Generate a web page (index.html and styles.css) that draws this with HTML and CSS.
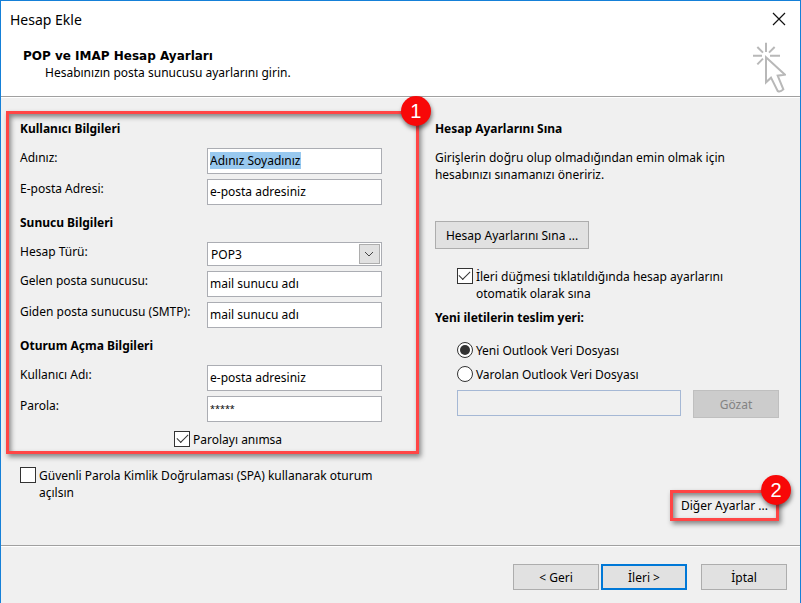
FILE: index.html
```html
<!DOCTYPE html>
<html lang="tr">
<head>
<meta charset="utf-8">
<title>Hesap Ekle</title>
<link rel="stylesheet" href="styles.css">
</head>
<body>
<form class="dialog">
  <header class="header">
    <div class="titlebar">
      <span class="title">Hesap Ekle</span>
      <button type="button" class="close" aria-label="Kapat">
        <svg width="14" height="14" viewBox="0 0 14 14"><path d="M1 1L13 13M13 1L1 13" stroke="#111" stroke-width="1.2" fill="none"/></svg>
      </button>
    </div>
    <div class="intro">
      <div>
        <h1 class="intro-title">POP ve IMAP Hesap Ayarları</h1>
        <p class="intro-text">Hesabınızın posta sunucusu ayarlarını girin.</p>
      </div>
      <svg class="pointer" width="34" height="51" viewBox="36 36 102 153" aria-hidden="true">
        <path d="M39 77H66M90 77H120M78 38V66M52 51L69 68M104 51L87 68M52 103L69 86" fill="none" stroke="#b8b8b8" stroke-width="6"/>
        <path d="M78 82V157L93 143L113 183Q121 187 130 178L113 137L135 134Z" fill="#fff" stroke="#b8b8b8" stroke-width="6"/>
      </svg>
    </div>
  </header>

  <main class="content">
    <div class="account">
      <section class="callout callout-form">
        <span class="badge">1</span>
        <h2 class="heading">Kullanıcı Bilgileri</h2>
        <div class="fields">
          <label for="name">Adınız:</label>
          <input class="text" id="name" type="text" value="Adınız Soyadınız">
          <label for="mail">E-posta Adresi:</label>
          <input class="text" id="mail" type="text" value="e-posta adresiniz">
        </div>
        <h2 class="heading">Sunucu Bilgileri</h2>
        <div class="fields">
          <label for="type">Hesap Türü:</label>
          <div class="select">
            <select id="type"><option>POP3</option></select>
            <span class="arrow"><svg width="10" height="6" viewBox="0 0 10 6"><path d="M1 1L5 5L9 1" stroke="#444" fill="none"/></svg></span>
          </div>
          <label for="incoming">Gelen posta sunucusu:</label>
          <input class="text" id="incoming" type="text" value="mail sunucu adı">
          <label for="outgoing">Giden posta sunucusu (SMTP):</label>
          <input class="text" id="outgoing" type="text" value="mail sunucu adı">
        </div>
        <h2 class="heading">Oturum Açma Bilgileri</h2>
        <div class="fields">
          <label for="user">Kullanıcı Adı:</label>
          <input class="text" id="user" type="text" value="e-posta adresiniz">
          <label for="password">Parola:</label>
          <input class="text masked" id="password" type="text" value="*****">
        </div>
        <label class="choice remember"><input type="checkbox" checked>Parolayı anımsa</label>
      </section>
      <label class="choice spa"><input type="checkbox">Güvenli Parola Kimlik Doğrulaması (SPA) kullanarak oturum açılsın</label>
    </div>

    <div class="side">
      <h2 class="heading">Hesap Ayarlarını Sına</h2>
      <p class="advice">Girişlerin doğru olup olmadığından emin olmak için hesabınızı sınamanızı öneririz.</p>
      <button type="button" class="button test">Hesap Ayarlarını Sına ...</button>
      <label class="choice auto-test"><input type="checkbox" checked>İleri düğmesi tıklatıldığında hesap ayarlarını otomatik olarak sına</label>
      <h2 class="heading">Yeni iletilerin teslim yeri:</h2>
      <div class="delivery">
        <label class="choice"><input type="radio" name="delivery" checked>Yeni Outlook Veri Dosyası</label>
        <label class="choice"><input type="radio" name="delivery">Varolan Outlook Veri Dosyası</label>
        <div class="file">
          <input class="text" type="text" aria-label="Veri dosyası" disabled>
          <button type="button" class="button" disabled>Gözat</button>
        </div>
      </div>
      <div class="callout callout-more">
        <span class="badge">2</span>
        <button type="button" class="more">Diğer Ayarlar ...</button>
      </div>
    </div>
  </main>

  <footer class="footer">
    <button type="button" class="button">&lt; Geri</button>
    <button type="button" class="button primary">İleri &gt;</button>
    <button type="button" class="button cancel">İptal</button>
  </footer>
</form>
<script src="script.js"></script>
</body>
</html>
```

FILE: styles.css
```css
* {
  box-sizing: border-box;
}

body {
  margin: 0;
  color: #000;
  background: #f0f0f0;
  font: 12px/17px "Noto Sans", sans-serif;
}

h1,
h2,
p {
  margin: 0;
}

button,
input,
select {
  margin: 0;
  color: inherit;
  font: inherit;
}

.dialog {
  display: flex;
  flex-direction: column;
  min-height: 100vh;
  border: 1px solid #1580d8;
  border-bottom: 0;
}

.header {
  background: #fff;
  border-bottom: 1px solid #a0a0a0;
}

.titlebar {
  display: flex;
  justify-content: space-between;
  align-items: center;
  height: 36px;
  padding: 0 14px 0 9px;
}

.title {
  font-size: 14px;
}

.close {
  display: flex;
  padding: 0;
  border: 0;
  background: none;
}

.intro {
  display: flex;
  justify-content: space-between;
  height: 59px;
  padding: 5px 14px 0 22px;
}

.intro-title {
  padding-top: 6px;
  font: bold 12px/16px "DejaVu Sans", sans-serif;
}

.intro-text {
  padding-left: 22px;
}

.content {
  flex: 1;
  display: grid;
  grid-template-columns: 6fr 5fr;
  column-gap: 16px;
  padding: 13px 21px 24px 5px;
  border-top: 1px solid #fff;
  border-bottom: 1px solid #a0a0a0;
}

.callout {
  position: relative;
  border: 3px solid #ff4545;
  box-shadow: 2px 3px 5px rgba(0, 0, 0, .45), inset 2px 3px 5px rgba(0, 0, 0, .45);
}

.callout-form {
  padding: 6px 34px 3px 11px;
}

.badge {
  position: absolute;
  top: -18px;
  right: -15px;
  width: 30px;
  height: 30px;
  border-radius: 50%;
  background: #f80808;
  color: #fff;
  box-shadow: 1px 3px 4px rgba(0, 0, 0, .5);
  font: 20px/30px "Liberation Sans", sans-serif;
  text-align: center;
}

.heading {
  font-size: 12px;
  line-height: 18px;
}

.fields {
  display: grid;
  grid-template-columns: 187px 1fr;
  row-gap: 5px;
  padding: 10px 0 9px;
}

.fields label {
  padding-top: 1px;
}

.text {
  width: 100%;
  min-width: 0;
  height: 26px;
  padding: 0 2px 1px;
  border: 1px solid #abadb3;
  border-radius: 0;
  outline: 0;
  background: #fff;
}

.text::selection {
  background: #99c9ef;
  color: #000;
}

.text:disabled {
  border-color: #a5b8d5;
  background: #f0f0f0;
}

.masked {
  font-size: 9px;
}

.select {
  position: relative;
  height: 24px;
}

.select select {
  width: 100%;
  height: 100%;
  padding: 0 3px;
  appearance: none;
  border: 1px solid #abadb3;
  border-radius: 0;
  background: #fff;
}

.arrow {
  position: absolute;
  top: 2px;
  right: 2px;
  bottom: 2px;
  display: grid;
  place-items: center;
  width: 21px;
  border: 1px solid #adadad;
  background: #e1e1e1;
  pointer-events: none;
}

.choice {
  display: grid;
  grid-template-columns: 16px 1fr;
  column-gap: 3px;
}

.choice input {
  display: grid;
  place-items: center;
  width: 16px;
  height: 16px;
  appearance: none;
  border: 1px solid #333;
  background: #fff;
}

.choice input[type="checkbox"]:checked::before {
  content: "";
  width: 10px;
  height: 5px;
  margin-bottom: 4px;
  border: solid #333;
  border-width: 0 0 1px 1px;
  transform: rotate(-45deg);
}

.choice input[type="radio"] {
  border-radius: 50%;
}

.choice input[type="radio"]:checked::before {
  content: "";
  width: 10px;
  height: 10px;
  border-radius: 50%;
  background: #333;
}

.remember {
  padding-left: 154px;
}

.spa {
  padding: 13px 34px 0 14px;
}

.side {
  display: flex;
  flex-direction: column;
  align-items: flex-start;
  padding-top: 9px;
}

.advice {
  padding: 11px 30px 38px 0;
}

.button {
  min-width: 86px;
  height: 26px;
  padding: 0 8px;
  border: 1px solid #adadad;
  background: #e1e1e1;
}

.button:disabled {
  border-color: #bfbfbf;
  background: #ccc;
  color: #838383;
}

.test {
  height: 28px;
  padding: 0 10px;
}

.auto-test {
  padding: 19px 30px 7px 22px;
}

.delivery {
  display: grid;
  row-gap: 7px;
  width: 100%;
  padding: 15px 0 0 22px;
}

.file {
  display: flex;
  gap: 12px;
}

.file .button {
  height: 28px;
}

.callout-more {
  align-self: flex-end;
  margin-top: auto;
}

.more {
  height: 25px;
  padding: 0 8px;
  border: 0;
  background: none;
}

.footer {
  display: flex;
  justify-content: flex-end;
  gap: 2px;
  padding: 17px 13px 13px;
  border-top: 1px solid #fff;
}

.primary {
  border: 2px solid #0078d7;
}

.cancel {
  margin-left: 12px;
}
```

FILE: script.js
```js
const nameField = document.getElementById("name");
nameField.focus();
nameField.select();
```
